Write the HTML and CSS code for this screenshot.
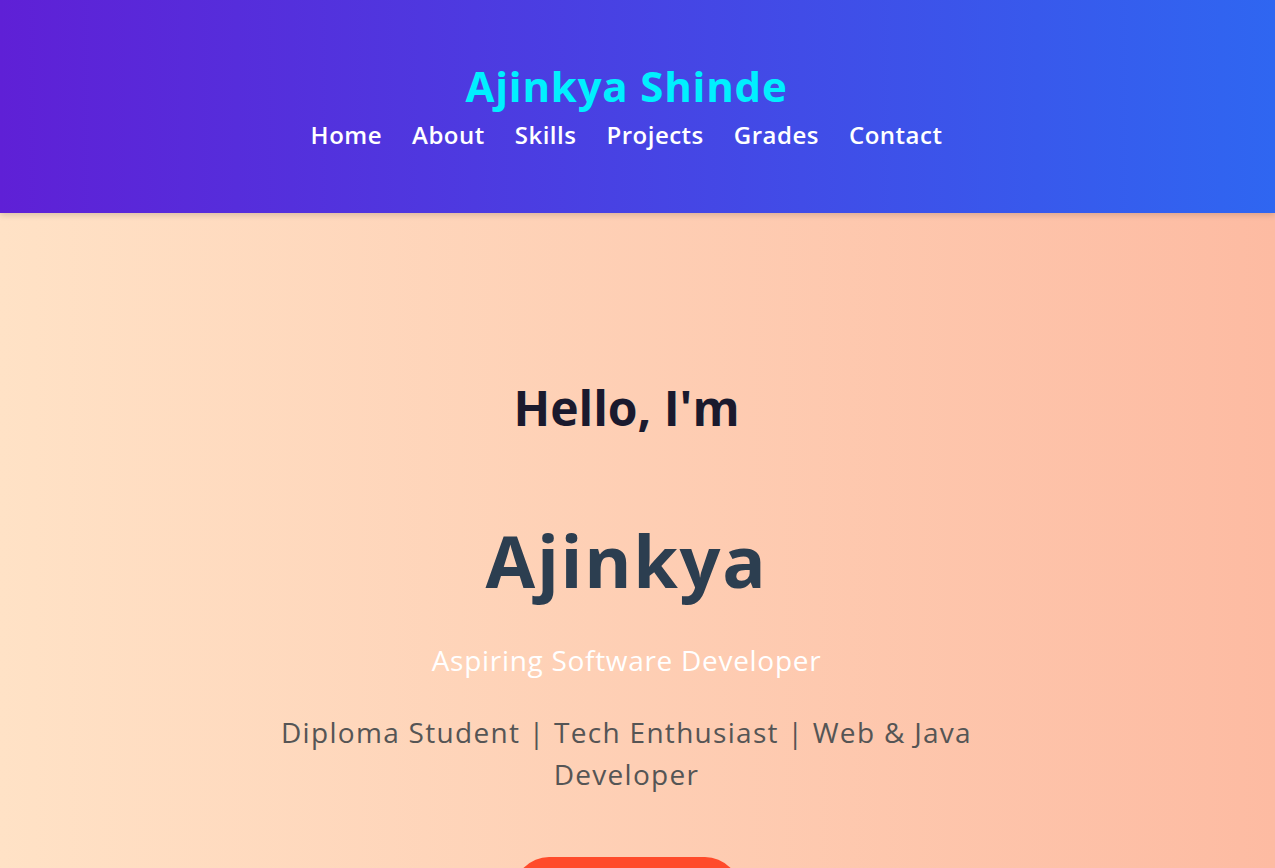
FILE: index.html
```html
<!DOCTYPE html>
<html lang="en">
<head>
<meta charset="utf-8">
<title>Ajinkya Shinde</title>
<link rel="stylesheet" href="styles.css">
</head>
<body>
<header class="site-header">
  <h1 class="brand">Ajinkya Shinde</h1>
  <nav class="nav">
    <a href="#home">Home</a>
    <a href="#about">About</a>
    <a href="#skills">Skills</a>
    <a href="#projects">Projects</a>
    <a href="#grades">Grades</a>
    <a href="#contact">Contact</a>
  </nav>
</header>
<section class="hero" id="home">
  <h2 class="hello">Hello, I'm</h2>
  <h1 class="name">Ajinkya</h1>
  <p class="role">Aspiring Software Developer</p>
  <p class="tagline">Diploma Student | Tech Enthusiast | Web &amp; Java Developer</p>
  <a class="cta" href="#contact">Contact Me</a>
</section>
</body>
</html>
```
FILE: styles.css
```css
* { box-sizing: border-box; }
html, body { margin: 0; padding: 0; }
body {
  font-family: "Open Sans", "DejaVu Sans", sans-serif;
  overflow: hidden;
  height: 868px;
  background: linear-gradient(to right, #ffe2c6, #fdbba2);
}
.site-header {
  height: 213px;
  background: linear-gradient(to right, #5f20d6, #2f66f1);
  box-shadow: 0 2px 6px rgba(0,0,0,0.15);
  display: flex;
  flex-direction: column;
  align-items: center;
  padding: 57px 22px 0 0;
  position: relative;
  z-index: 1;
}
.brand {
  margin: 0;
  color: #00f0ff;
  font-size: 42px;
  font-weight: 700;
  line-height: 58px;
  letter-spacing: 0.8px;
}
.nav {
  display: flex;
  gap: 30px;
  margin-top: 4px;
}
.nav a {
  color: #fff;
  text-decoration: none;
  font-size: 24px;
  font-weight: 600;
  line-height: 32px;
  letter-spacing: 0.5px;
}
.hero {
  display: flex;
  flex-direction: column;
  align-items: center;
  text-align: center;
  padding: 160px 22px 0 0;
}
.hello {
  margin: 0;
  font-size: 48px;
  font-weight: 700;
  color: #1a1a2e;
  line-height: 70px;
}
.name {
  margin: 72px 0 0;
  font-size: 72px;
  font-weight: 700;
  color: #2c3e50;
  line-height: 90px;
  letter-spacing: 1.7px;
}
.role {
  margin: 34px 0 0;
  font-size: 28px;
  font-weight: 400;
  color: #fff;
  line-height: 42px;
  letter-spacing: 0.7px;
}
.tagline {
  margin: 30px 0 0;
  max-width: 700px;
  font-size: 28px;
  font-weight: 500;
  color: #555;
  line-height: 42px;
  letter-spacing: 1.3px;
}
.cta {
  margin-top: 62px;
  display: inline-block;
  width: 226px;
  padding: 20px 0;
  border-radius: 40px;
  background: #ff4b2b;
  color: #fff;
  text-decoration: none;
  font-size: 22px;
  font-weight: 600;
}
```
